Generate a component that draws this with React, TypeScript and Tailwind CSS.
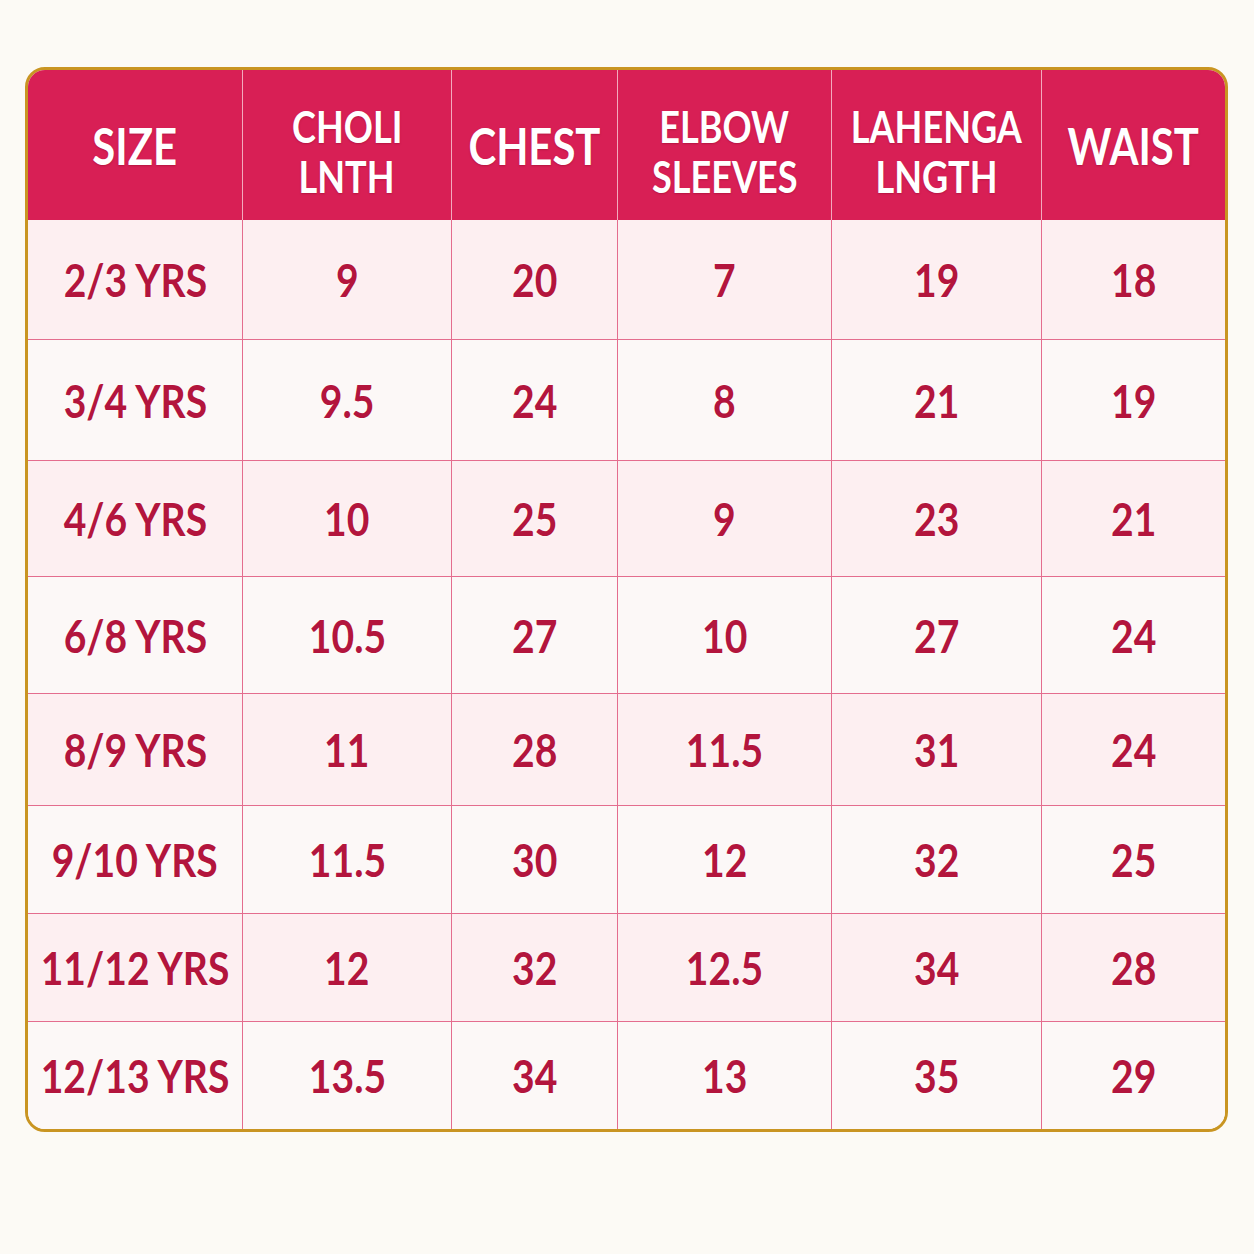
import React from "react";

const headers = [
  ["SIZE"],
  ["CHOLI", "LNTH"],
  ["CHEST"],
  ["ELBOW", "SLEEVES"],
  ["LAHENGA", "LNGTH"],
  ["WAIST"],
];

const rows = [
  ["2/3 YRS", "9", "20", "7", "19", "18"],
  ["3/4 YRS", "9.5", "24", "8", "21", "19"],
  ["4/6 YRS", "10", "25", "9", "23", "21"],
  ["6/8 YRS", "10.5", "27", "10", "27", "24"],
  ["8/9 YRS", "11", "28", "11.5", "31", "24"],
  ["9/10 YRS", "11.5", "30", "12", "32", "25"],
  ["11/12 YRS", "12", "32", "12.5", "34", "28"],
  ["12/13 YRS", "13.5", "34", "13", "35", "29"],
];

const rowHeights = ["h-[120px]", "h-[121px]", "h-[116px]", "h-[117px]", "h-[112px]", "h-[108px]", "h-[108px]", "h-[107px]"];

// narrow look: bold Lato squeezed horizontally
const Narrow = ({ children, head }: { children: React.ReactNode; head?: boolean }) => (
  <span className={`inline-block whitespace-nowrap origin-center ${head ? "scale-x-[0.82]" : "scale-x-[0.85]"}`}>
    {children}
  </span>
);

export default function App() {
  return (
    <div className="min-h-[1254px] w-full bg-[#fcfaf5] px-[25px] pt-[67px] font-['Lato','Liberation_Sans',sans-serif]">
      <div className="w-[1203px] rounded-[20px] border-[3px] border-[#c99522] overflow-hidden bg-white">
        <div className="grid grid-cols-[215px_209px_166px_214px_210px_1fr]">
          {headers.map((h, i) => (
            <div
              key={i}
              className={`h-[150px] bg-[#d81f55] flex flex-col items-center justify-center text-white font-bold ${
                i < 5 ? "border-r border-[#f3a9bd]" : ""
              } ${h.length > 1 ? "text-[44px] leading-[50px] pt-[12px]" : "text-[51px] leading-[56px] pt-[2px]"} [text-shadow:0_1px_2px_rgba(120,0,30,0.35)]`}
            >
              {h.map((line) => (
                <Narrow key={line} head>
                  {line}
                </Narrow>
              ))}
            </div>
          ))}
          {rows.map((r, ri) =>
            r.map((cell, ci) => (
              <div
                key={`${ri}-${ci}`}
                className={`${rowHeights[ri]} flex items-center justify-center text-[46px] font-bold text-[#b3153d] ${
                  ri % 2 === 0 ? "bg-[#fdeff1]" : "bg-[#fcf8f7]"
                } ${ci < 5 ? "border-r-[1.5px] border-[#e46d8e]" : ""} ${
                  ri < rows.length - 1 ? "border-b-[1.5px] border-b-[#e46d8e]" : ""
                } [text-shadow:0_0_3px_#ffffff]`}
              >
                <Narrow>{cell}</Narrow>
              </div>
            ))
          )}
        </div>
      </div>
    </div>
  );
}
